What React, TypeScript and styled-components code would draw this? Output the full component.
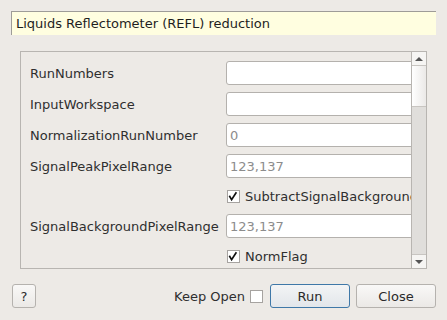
import React from "react";
import styled, { createGlobalStyle } from "styled-components";

const GlobalStyle = createGlobalStyle`
  html, body {
    margin: 0;
    padding: 0;
    background: #edeae6;
  }
  body {
    font-family: "DejaVu Sans", "Liberation Sans", sans-serif;
    font-size: 13px;
    color: #2f2f2f;
  }
`;

interface Field {
  label?: string;
  kind: "text" | "check";
  value?: string;
  placeholder?: string;
  checked?: boolean;
}

const fields: Field[] = [
  { label: "RunNumbers", kind: "text" },
  { label: "InputWorkspace", kind: "text" },
  { label: "NormalizationRunNumber", kind: "text", placeholder: "0" },
  { label: "SignalPeakPixelRange", kind: "text", placeholder: "123,137" },
  { kind: "check", value: "SubtractSignalBackground", checked: true },
  { label: "SignalBackgroundPixelRange", kind: "text", placeholder: "123,137" },
  { kind: "check", value: "NormFlag", checked: true },
];

function Check({ checked }: { checked?: boolean }) {
  return (
    <CheckBox>
      {checked && (
        <svg width="11" height="11" viewBox="0 0 11 11">
          <path d="M1.3 4.8 L3.6 8.6 L8.4 1.2" fill="none" stroke="#111" strokeWidth="1.7" />
        </svg>
      )}
    </CheckBox>
  );
}

export default function App() {
  return (
    <>
      <GlobalStyle />
      <Dialog>
        <Description>Liquids Reflectometer (REFL) reduction</Description>
        <Panel>
          <Viewport>
            <Form>
              {fields.map((f, i) => (
                <React.Fragment key={i}>
                  <Label>{f.label ?? ""}</Label>
                  {f.kind === "text" ? (
                    <Input>{f.placeholder && <Placeholder>{f.placeholder}</Placeholder>}</Input>
                  ) : (
                    <CheckRow>
                      <Check checked={f.checked} />
                      <span>{f.value}</span>
                    </CheckRow>
                  )}
                </React.Fragment>
              ))}
            </Form>
          </Viewport>
          <ScrollBar>
            <ArrowButton>
              <Triangle $up />
            </ArrowButton>
            <Track>
              <Thumb />
            </Track>
            <ArrowButton $bottom>
              <Triangle />
            </ArrowButton>
          </ScrollBar>
        </Panel>
        <Footer>
          <Button $small>?</Button>
          <Spacer />
          <KeepOpen>
            Keep Open
            <CheckBox />
          </KeepOpen>
          <Button $default>Run</Button>
          <Button>Close</Button>
        </Footer>
      </Dialog>
    </>
  );
}

const Dialog = styled.div`
  width: 447px;
  height: 320px;
  box-sizing: border-box;
  padding: 11px 11px 0 11px;
  display: flex;
  flex-direction: column;
`;

const Description = styled.div`
  height: 24px;
  width: 425px;
  box-sizing: border-box;
  background: #fffee0;
  border-top: 1px solid #9e9c98;
  border-left: 1px solid #9e9c98;
  padding-left: 4px;
  display: flex;
  align-items: center;
  color: #1e1e1e;
`;

const Panel = styled.div`
  margin: 16px 0 0 9px;
  width: 407px;
  height: 218px;
  box-sizing: border-box;
  border: 1px solid #b8b5b1;
  display: flex;
  overflow: hidden;
`;

const Viewport = styled.div`
  flex: 1;
  overflow: hidden;
  padding: 9px 0 0 9px;
`;

const Form = styled.div`
  width: 420px;
  display: grid;
  grid-template-columns: 190px 1fr;
  column-gap: 6px;
  row-gap: 7px;
  align-items: center;
`;

const Label = styled.div`
  white-space: nowrap;
  color: #2f2f2f;
`;

const Input = styled.div`
  height: 24px;
  box-sizing: border-box;
  background: #fff;
  border: 1px solid #b4b1ad;
  border-radius: 3px;
  padding-left: 3px;
  display: flex;
  align-items: center;
`;

const Placeholder = styled.span`
  color: #8c8c8c;
`;

const CheckRow = styled.div`
  height: 22px;
  display: flex;
  align-items: center;
  gap: 5px;
  padding-left: 1px;
  white-space: nowrap;
  color: #2f2f2f;
`;

const CheckBox = styled.span`
  width: 13px;
  height: 13px;
  box-sizing: border-box;
  border: 1px solid #a6a3a0;
  background: #fff;
  display: inline-flex;
  align-items: center;
  justify-content: center;
  flex-shrink: 0;
`;

const ScrollBar = styled.div`
  width: 15px;
  box-sizing: border-box;
  border-left: 1px solid #b8b5b1;
  display: flex;
  flex-direction: column;
`;

const ArrowButton = styled.div<{ $bottom?: boolean }>`
  height: 13px;
  flex-shrink: 0;
  background: #f6f5f3;
  ${(p) => (p.$bottom ? "border-top: 1px solid #c8c5c1;" : "border-bottom: 1px solid #c8c5c1;")}
  display: flex;
  align-items: center;
  justify-content: center;
`;

const Triangle = styled.span<{ $up?: boolean }>`
  width: 0;
  height: 0;
  border-left: 4px solid transparent;
  border-right: 4px solid transparent;
  ${(p) => (p.$up ? "border-bottom: 4px solid #555;" : "border-top: 4px solid #555;")}
`;

const Track = styled.div`
  flex: 1;
  background: #e0dedb;
`;

const Thumb = styled.div`
  height: 41px;
  box-sizing: border-box;
  background: linear-gradient(to right, #ffffff, #ebe9e7);
  border-bottom: 1px solid #c8c5c1;
`;

const Footer = styled.div`
  margin-top: 15px;
  height: 24px;
  display: flex;
  align-items: center;
  gap: 6px;
`;

const Spacer = styled.div`
  flex: 1;
`;

const KeepOpen = styled.label`
  display: flex;
  align-items: center;
  gap: 5px;
  margin-right: 1px;
  color: #2f2f2f;
`;

const Button = styled.div<{ $small?: boolean; $default?: boolean }>`
  width: ${(p) => (p.$small ? "24px" : "80px")};
  height: 24px;
  box-sizing: border-box;
  margin-left: ${(p) => (p.$small ? "1px" : "0")};
  border: 1px solid ${(p) => (p.$default ? "#3f78a8" : "#b5b2ae")};
  border-radius: 3px;
  background: ${(p) =>
    p.$default
      ? "linear-gradient(#f3f4f5, #e2e6ea)"
      : "linear-gradient(#f9f8f7, #ebe9e6)"};
  display: flex;
  align-items: center;
  justify-content: center;
  color: #2a2a2a;
`;
